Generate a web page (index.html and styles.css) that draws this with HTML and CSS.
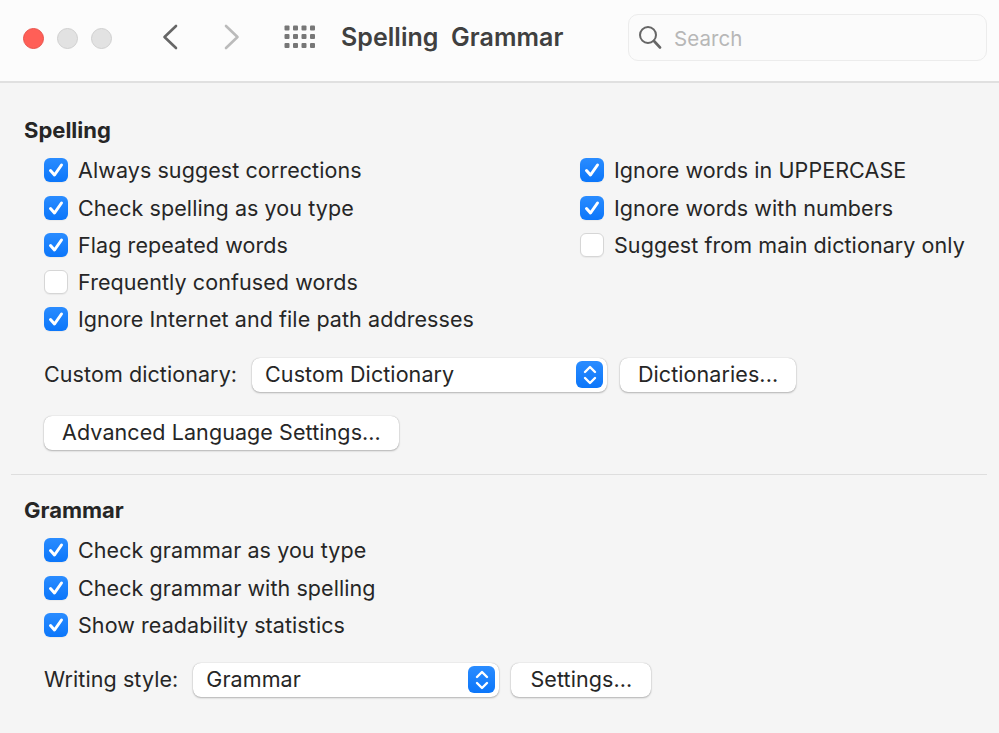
FILE: index.html
```html
<!DOCTYPE html>
<html lang="en">
<head>
<meta charset="utf-8">
<title>Spelling Grammar</title>
<link rel="stylesheet" href="styles.css">
</head>
<body>
<header class="toolbar">
  <div class="lights">
    <span class="light red"></span>
    <span class="light"></span>
    <span class="light"></span>
  </div>
  <svg class="nav back" width="18" height="26" viewBox="0 0 18 26"><path d="M15 2 L3.5 13 L15 24" fill="none" stroke="#666" stroke-width="2.6" stroke-linecap="round" stroke-linejoin="round"/></svg>
  <svg class="nav fwd" width="18" height="26" viewBox="0 0 18 26"><path d="M3 2 L14.5 13 L3 24" fill="none" stroke="#bbb" stroke-width="2.6" stroke-linecap="round" stroke-linejoin="round"/></svg>
  <svg class="grid-icon" width="32" height="24" viewBox="0 0 32 24" fill="#777">
    <rect x="0.500" y="0.500" width="5" height="5" rx="1"/><rect x="9" y="0.500" width="5" height="5" rx="1"/><rect x="17.500" y="0.500" width="5" height="5" rx="1"/><rect x="26" y="0.500" width="5" height="5" rx="1"/>
    <rect x="0.500" y="9" width="5" height="5" rx="1"/><rect x="9" y="9" width="5" height="5" rx="1"/><rect x="17.500" y="9" width="5" height="5" rx="1"/><rect x="26" y="9" width="5" height="5" rx="1"/>
    <rect x="0.500" y="18" width="5" height="5" rx="1"/><rect x="9" y="18" width="5" height="5" rx="1"/><rect x="17.500" y="18" width="5" height="5" rx="1"/><rect x="26" y="18" width="5" height="5" rx="1"/>
  </svg>
  <h1 class="title">Spelling&nbsp; Grammar</h1>
  <div class="search">
    <svg width="24" height="24" viewBox="0 0 24 24"><circle cx="10" cy="10" r="8" fill="none" stroke="#666" stroke-width="2"/><path d="M16 16 L22 22.500" stroke="#666" stroke-width="2.600" stroke-linecap="round"/></svg>
    <span class="placeholder">Search</span>
  </div>
</header>

<main>
  <section class="section spelling">
    <h2 class="heading">Spelling</h2>
    <div class="options">
      <ul class="col left">
        <li class="row"><span class="box on"><svg width="24" height="24" viewBox="0 0 24 24"><path class="tick" d="M6.500 12.500 L10.500 17 L17.500 7"/></svg></span>Always suggest corrections</li>
        <li class="row"><span class="box on"><svg width="24" height="24" viewBox="0 0 24 24"><path class="tick" d="M6.500 12.500 L10.500 17 L17.500 7"/></svg></span>Check spelling as you type</li>
        <li class="row"><span class="box on"><svg width="24" height="24" viewBox="0 0 24 24"><path class="tick" d="M6.500 12.500 L10.500 17 L17.500 7"/></svg></span>Flag repeated words</li>
        <li class="row"><span class="box"></span>Frequently confused words</li>
        <li class="row"><span class="box on"><svg width="24" height="24" viewBox="0 0 24 24"><path class="tick" d="M6.500 12.500 L10.500 17 L17.500 7"/></svg></span>Ignore Internet and file path addresses</li>
      </ul>
      <ul class="col right">
        <li class="row"><span class="box on"><svg width="24" height="24" viewBox="0 0 24 24"><path class="tick" d="M6.500 12.500 L10.500 17 L17.500 7"/></svg></span>Ignore words in UPPERCASE</li>
        <li class="row"><span class="box on"><svg width="24" height="24" viewBox="0 0 24 24"><path class="tick" d="M6.500 12.500 L10.500 17 L17.500 7"/></svg></span>Ignore words with numbers</li>
        <li class="row"><span class="box"></span>Suggest from main dictionary only</li>
      </ul>
    </div>
    <div class="control-row dict-row">
      <span class="label">Custom dictionary:</span>
      <div class="popup dict-popup"><span>Custom Dictionary</span><span class="stepper"><svg width="24" height="28" viewBox="0 0 24 28"><path class="chev" d="M7 11 L12 6 L17 11 M7 17 L12 22 L17 17"/></svg></span></div>
      <div class="btn dict-btn">Dictionaries...</div>
    </div>
    <div class="btn adv-btn">Advanced Language Settings...</div>
  </section>

  <hr class="divider">

  <section class="section grammar">
    <h2 class="heading">Grammar</h2>
    <ul class="col left">
      <li class="row"><span class="box on"><svg width="24" height="24" viewBox="0 0 24 24"><path class="tick" d="M6.500 12.500 L10.500 17 L17.500 7"/></svg></span>Check grammar as you type</li>
      <li class="row"><span class="box on"><svg width="24" height="24" viewBox="0 0 24 24"><path class="tick" d="M6.500 12.500 L10.500 17 L17.500 7"/></svg></span>Check grammar with spelling</li>
      <li class="row"><span class="box on"><svg width="24" height="24" viewBox="0 0 24 24"><path class="tick" d="M6.500 12.500 L10.500 17 L17.500 7"/></svg></span>Show readability statistics</li>
    </ul>
    <div class="control-row style-row">
      <span class="label">Writing style:</span>
      <div class="popup style-popup"><span>Grammar</span><span class="stepper"><svg width="24" height="28" viewBox="0 0 24 28"><path class="chev" d="M7 11 L12 6 L17 11 M7 17 L12 22 L17 17"/></svg></span></div>
      <div class="btn style-btn">Settings...</div>
    </div>
  </section>
</main>
</body>
</html>
```

FILE: styles.css
```css
* { box-sizing: border-box; }
html, body { margin: 0; padding: 0; }
body {
  width: 999px;
  height: 733px;
  overflow: hidden;
  background: #f5f5f5;
  color: #262626;
  font-family: Inter, "Liberation Sans", sans-serif;
  font-size: 21.5px;
  letter-spacing: 0.08px;
}
.toolbar {
  height: 83px;
  background: #fcfcfc;
  border-bottom: 2px solid #e0e0e0;
  display: flex;
  align-items: center;
  padding: 0 12px 8px 23px;
}
.lights { display: flex; gap: 13px; margin-top: 3px; }
.light {
  width: 21px;
  height: 21px;
  border-radius: 50%;
  background: #e2e2e2;
  border: 1px solid #d0d0d0;
}
.light.red { background: #ff5f57; border-color: #e9534c; }
.nav { flex: none; }
.back { margin-left: 49px; }
.fwd { margin-left: 44px; }
.grid-icon { flex: none; margin-left: 43px; }
.title {
  margin: 0 0 0 25px;
  font-size: 25px;
  font-weight: 600;
  color: #404040;
  letter-spacing: 0.03px;
  white-space: nowrap;
  width: 287px;
}
.search {
  width: 359px;
  height: 47px;
  border: 1px solid #ececec;
  border-radius: 10px;
  background: #fbfbfb;
  display: flex;
  align-items: center;
  padding-left: 9px;
  gap: 12px;
  margin-top: 1px;
}
.placeholder { color: #b7b7b7; font-size: 20.5px; margin-top: 2px; }

main { padding: 0 12px 0 11px; }
.section { padding-left: 13px; }
.heading {
  margin: 0;
  font-size: 22px;
  font-weight: 700;
  line-height: 30px;
  color: #262626;
  letter-spacing: 0;
}
.spelling { padding-top: 32px; }
.options { display: flex; margin-top: 6.8px; padding-left: 20px; }
.col { list-style: none; margin: 0; padding: 0; }
.options .left { width: 536px; }
.row {
  display: flex;
  align-items: center;
  gap: 10px;
  height: 37.25px;
  white-space: nowrap;
}
.box {
  flex: none;
  width: 24px;
  height: 24px;
  border-radius: 6px;
  background: #fff;
  border: 1px solid #d6d6d6;
  box-shadow: 0 1px 1px rgba(0,0,0,.05);
}
.box.on {
  border: none;
  background: linear-gradient(#2a8cff, #0b76fa);
}
.box svg { display: block; }
.tick {
  fill: none;
  stroke: #fff;
  stroke-width: 3;
  stroke-linecap: round;
  stroke-linejoin: round;
}
.control-row { display: flex; align-items: center; padding-left: 20px; }
.dict-row { margin-top: 19.8px; }
.label { white-space: nowrap; padding-bottom: 2px; }
.popup, .btn {
  height: 34px;
  background: #fff;
  border-radius: 8px;
  box-shadow: 0 0 1px rgba(0,0,0,.3), 0 1px 2px rgba(0,0,0,.25);
  display: flex;
  align-items: center;
  white-space: nowrap;
  padding-bottom: 2px;
}
.popup {
  justify-content: space-between;
  padding: 0 4px 0 13px;
}
.popup > span:first-child { padding-bottom: 2px; }
.stepper {
  width: 27px;
  height: 27px;
  border-radius: 6px;
  background: linear-gradient(#2a8cff, #0b76fa);
  display: flex;
  align-items: center;
  justify-content: center;
}
.chev {
  fill: none;
  stroke: #fff;
  stroke-width: 2.4;
  stroke-linecap: round;
  stroke-linejoin: round;
}
.btn { justify-content: center; }
.dict-popup { width: 355px; margin-left: 15px; }
.dict-btn { width: 176px; margin-left: 13px; }
.adv-btn { width: 355px; margin: 24px 0 0 20px; }
.divider {
  margin: 24px 0 0;
  border: 0;
  height: 1px;
  background: #dedede;
}
.grammar { padding-top: 20px; }
.grammar .left { margin-top: 6.8px; padding-left: 20px; }
.style-row { margin-top: 19.5px; }
.style-popup { width: 306px; margin-left: 15px; }
.style-btn { width: 140px; margin-left: 12px; }
```
